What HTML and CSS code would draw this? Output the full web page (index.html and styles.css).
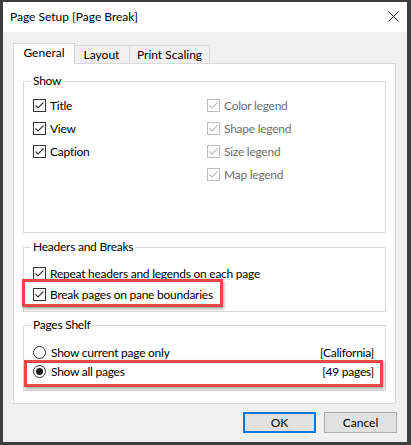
FILE: index.html
```html
<!DOCTYPE html>
<html>
<head>
<meta charset="utf-8">
<link rel="stylesheet" href="styles.css">
</head>
<body>
<div class="window">
  <div class="titlebar">
    <span class="title">Page Setup [Page Break]</span>
    <svg class="close" width="11" height="11" viewBox="0 0 11 11"><path d="M0.5 0.5 L10.5 10.5 M10.5 0.5 L0.5 10.5" stroke="#111" stroke-width="1" fill="none"/></svg>
  </div>
  <div class="content">
    <div class="tabs">
      <div class="tab active">General</div>
      <div class="tab tab-layout">Layout</div>
      <div class="tab tab-scaling">Print Scaling</div>
    </div>
    <div class="panel">
      <fieldset class="group group-show">
        <legend>Show</legend>
        <div class="show-grid">
          <div class="col col-left">
            <div class="row"><span class="cb"><svg viewBox="0 0 13 13"><path d="M2.5 6.5 L5 9 L10.5 3.5"/></svg></span><span>Title</span></div>
            <div class="row"><span class="cb"><svg viewBox="0 0 13 13"><path d="M2.5 6.5 L5 9 L10.5 3.5"/></svg></span><span>View</span></div>
            <div class="row"><span class="cb"><svg viewBox="0 0 13 13"><path d="M2.5 6.5 L5 9 L10.5 3.5"/></svg></span><span>Caption</span></div>
          </div>
          <div class="col col-right">
            <div class="row disabled"><span class="cb"><svg viewBox="0 0 13 13"><path d="M2.5 6.5 L5 9 L10.5 3.5"/></svg></span><span>Color legend</span></div>
            <div class="row disabled"><span class="cb"><svg viewBox="0 0 13 13"><path d="M2.5 6.5 L5 9 L10.5 3.5"/></svg></span><span>Shape legend</span></div>
            <div class="row disabled"><span class="cb"><svg viewBox="0 0 13 13"><path d="M2.5 6.5 L5 9 L10.5 3.5"/></svg></span><span>Size legend</span></div>
            <div class="row disabled"><span class="cb"><svg viewBox="0 0 13 13"><path d="M2.5 6.5 L5 9 L10.5 3.5"/></svg></span><span>Map legend</span></div>
          </div>
        </div>
      </fieldset>
      <fieldset class="group group-headers">
        <legend>Headers and Breaks</legend>
        <div class="list">
          <div class="row row21"><span class="cb"><svg viewBox="0 0 13 13"><path d="M2.5 6.5 L5 9 L10.5 3.5"/></svg></span><span>Repeat headers and legends on each page</span></div>
          <div class="row row21 marked"><span class="cb"><svg viewBox="0 0 13 13"><path d="M2.5 6.5 L5 9 L10.5 3.5"/></svg></span><span>Break pages on pane boundaries</span><span class="highlight hl-break"></span></div>
        </div>
      </fieldset>
      <fieldset class="group group-pages">
        <legend>Pages Shelf</legend>
        <div class="list list-pages">
          <div class="row row19"><span class="radio"></span><span class="grow">Show current page only</span><span>[California]</span></div>
          <div class="row row19 marked"><span class="radio on"></span><span class="grow">Show all pages</span><span>[49 pages]</span><span class="highlight hl-pages"></span></div>
        </div>
      </fieldset>
    </div>
    <div class="buttons">
      <button class="btn btn-default">OK</button>
      <button class="btn">Cancel</button>
    </div>
  </div>
</div>
</body>
</html>
```
FILE: styles.css
```css
html, body {
  margin: 0;
  padding: 0;
  background: #3d3d3d;
}
body {
  font-family: Lato, "Liberation Sans", Arial, sans-serif;
  font-size: 12px;
  color: #000;
}
.window {
  width: 411px;
  height: 445px;
  box-sizing: border-box;
  border-style: solid;
  border-color: #3d3d3d;
  border-width: 2px 4px 3px 3px;
  display: flex;
  flex-direction: column;
  background: #f0f0f0;
}
.titlebar {
  height: 30px;
  flex: none;
  background: #fff;
  display: flex;
  align-items: center;
  justify-content: space-between;
  padding: 0 8px 0 7px;
}
.title {
  font-size: 12px;
  line-height: 16px;
  color: #000;
}
.close {
  display: block;
  margin-top: -1px;
}
.content {
  flex: 1;
  display: flex;
  flex-direction: column;
  padding: 11px 11px 0 10px;
}
.tabs {
  height: 20px;
  display: flex;
  align-items: flex-end;
}
.tab {
  box-sizing: border-box;
  height: 18px;
  border: 1px solid #d9d9d9;
  border-bottom: none;
  background: #f0f0f0;
  display: flex;
  align-items: center;
  justify-content: center;
  line-height: 16px;
}
.tab.active {
  width: 62px;
  height: 21px;
  margin-bottom: -1px;
  background: #fff;
  position: relative;
  z-index: 1;
  padding-bottom: 2px;
}
.tab-layout {
  width: 56px;
  margin-left: -1px;
  border-left: none;
}
.tab-scaling {
  width: 81px;
  margin-left: -1px;
}
.panel {
  height: 341px;
  box-sizing: border-box;
  border: 1px solid #d9d9d9;
  background: #fff;
  padding: 9px 9px 0 9px;
  letter-spacing: -0.25px;
}
.group {
  margin: 0;
  padding: 0 0 0 9px;
  border: 1px solid #dcdcdc;
  min-width: 0;
  box-sizing: border-box;
}
.group legend {
  padding: 0 2px;
  margin-left: -2px;
  line-height: 16px;
}
.group-show {
  height: 160px;
}
.group-headers {
  margin-top: 6px;
  height: 73px;
}
.group-pages {
  margin-top: 5px;
  height: 74px;
  padding-right: 11px;
}
.show-grid {
  display: flex;
  padding-top: 5px;
}
.col-left {
  width: 174px;
}
.row {
  display: flex;
  align-items: center;
  height: 23px;
  gap: 4px;
  white-space: nowrap;
}
.row21 {
  height: 21px;
}
.row19 {
  height: 19px;
  gap: 5px;
}
.list {
  padding-top: 8px;
}
.list-pages {
  padding-top: 10px;
}
.grow {
  flex: 1;
}
.cb {
  width: 13px;
  height: 13px;
  box-sizing: border-box;
  border: 1px solid #333;
  background: #fff;
  flex: none;
  position: relative;
}
.cb svg {
  position: absolute;
  left: -1px;
  top: -1px;
  width: 13px;
  height: 13px;
  fill: none;
  stroke: #333;
  stroke-width: 1.1;
}
.disabled {
  color: #6d6d6d;
}
.disabled .cb {
  border-color: #bcbcbc;
}
.disabled .cb svg {
  stroke: #bcbcbc;
}
.radio {
  width: 13px;
  height: 13px;
  box-sizing: border-box;
  border: 1px solid #333;
  border-radius: 50%;
  background: #fff;
  flex: none;
  display: flex;
  align-items: center;
  justify-content: center;
}
.radio.on::after {
  content: "";
  width: 7px;
  height: 7px;
  border-radius: 50%;
  background: #1a1a1a;
}
.marked {
  position: relative;
}
.highlight {
  position: absolute;
  box-sizing: border-box;
  border: 3px solid #ef4646;
  box-shadow: 1px 2px 3px rgba(0, 0, 0, 0.35);
  pointer-events: none;
}
.hl-break {
  left: -11px;
  top: -5px;
  width: 201px;
  height: 28px;
}
.hl-pages {
  left: -9px;
  top: -2px;
  width: 359px;
  height: 27px;
}
.buttons {
  display: flex;
  justify-content: flex-end;
  gap: 8px;
  margin-top: 8px;
  margin-right: -1px;
}
.btn {
  width: 73px;
  height: 21px;
  box-sizing: border-box;
  border: 1px solid #adadad;
  background: #e1e1e1;
  font-family: inherit;
  font-size: 12px;
  color: #000;
  padding: 0;
  margin: 0;
}
.btn-default {
  border: 2px solid #0078d7;
}
```
